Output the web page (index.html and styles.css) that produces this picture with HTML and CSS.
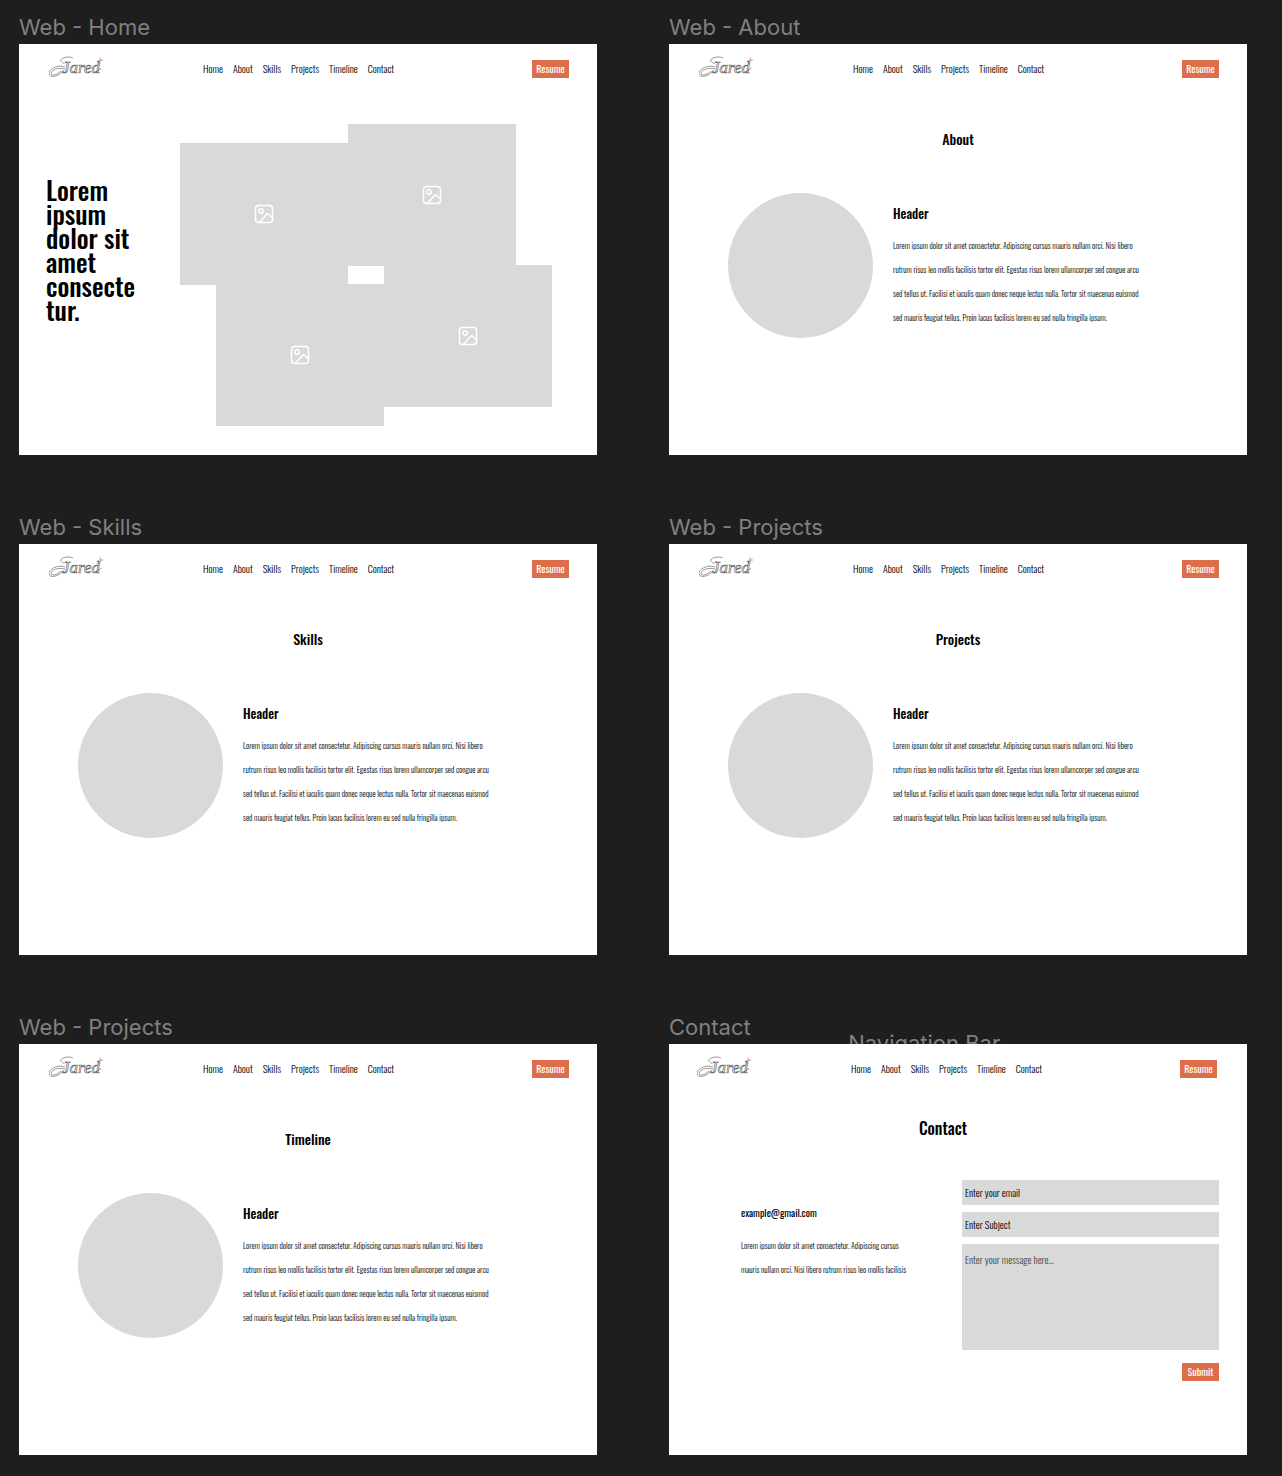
FILE: index.html
```html
<!DOCTYPE html>
<html lang="en">
<head>
<meta charset="utf-8">
<title>Portfolio wireframes</title>
<link rel="stylesheet" href="styles.css">
</head>
<body>
<svg class="defs" aria-hidden="true">
  <symbol id="logo" viewBox="0 0 56 22">
    <g fill="none" stroke="#555" stroke-width="0.6">
      <path d="M12 6C10 1 21 0 24 2M13 6c1 2 4 1 4-1M16 11C8 8-1 14 0 18c1 4 8 3 13-2M16 13C9 11 2 14 2 18c1 2 6 1 10-3"/>
      <text x="13" y="17" font-family="Liberation Serif, serif" font-style="italic" font-size="17">Jared</text>
      <path d="M48 15q3-1 4-3M49 8l3-5"/>
    </g>
    <path d="M51 0l1 3 3 1-3 1-2 1z" fill="#f2a596"/>
  </symbol>
  <symbol id="picture" viewBox="0 0 20 20">
    <g fill="none" stroke="#fff" stroke-width="1.5" stroke-linecap="round" stroke-linejoin="round">
      <rect x="1.5" y="1.5" width="17" height="17" rx="3"/>
      <circle cx="7" cy="7" r="2.2"/>
      <path d="M5.500 18.500L12.300 10.500Q13.500 9.300 14.700 10.500L18.500 14"/>
    </g>
  </symbol>
</svg>
<main class="canvas">
  <section class="frame">
    <h2 class="label">Web - Home</h2>
    <div class="board">
      <header class="bar">
        <svg class="logo" role="img" aria-label="Jared"><use href="#logo"/></svg>
        <nav class="links"><a href="#">Home</a><a href="#">About</a><a href="#">Skills</a><a href="#">Projects</a><a href="#">Timeline</a><a href="#">Contact</a></nav>
        <button class="btn" type="button">Resume</button>
      </header>
      <div class="hero">
        <h1 class="headline">Lorem<br>ipsum<br>dolor sit<br>amet<br>consecte<br>tur.</h1>
        <div class="gallery">
          <div class="pair">
            <div class="tile low"><svg class="pic"><use href="#picture"/></svg></div>
            <div class="tile"><svg class="pic"><use href="#picture"/></svg></div>
          </div>
          <div class="pair second">
            <div class="tile low"><svg class="pic"><use href="#picture"/></svg></div>
            <div class="tile"><svg class="pic"><use href="#picture"/></svg></div>
          </div>
        </div>
      </div>
    </div>
  </section>

  <section class="frame">
    <h2 class="label">Web - About</h2>
    <div class="board">
      <header class="bar">
        <svg class="logo" role="img" aria-label="Jared"><use href="#logo"/></svg>
        <nav class="links"><a href="#">Home</a><a href="#">About</a><a href="#">Skills</a><a href="#">Projects</a><a href="#">Timeline</a><a href="#">Contact</a></nav>
        <button class="btn" type="button">Resume</button>
      </header>
      <h3 class="title">About</h3>
      <div class="intro">
        <div class="avatar"></div>
        <div>
          <h4 class="subhead">Header</h4>
          <p class="copy">Lorem ipsum dolor sit amet consectetur. Adipiscing cursus mauris nullam orci. Nisi libero<br>rutrum risus leo mollis facilisis tortor elit. Egestas risus lorem ullamcorper sed congue arcu<br>sed tellus ut. Facilisi et iaculis quam donec neque lectus nulla. Tortor sit maecenas euismod<br>sed mauris feugiat tellus. Proin lacus facilisis lorem eu sed nulla fringilla ipsum.</p>
        </div>
      </div>
    </div>
  </section>

  <section class="frame">
    <h2 class="label">Web - Skills</h2>
    <div class="board">
      <header class="bar">
        <svg class="logo" role="img" aria-label="Jared"><use href="#logo"/></svg>
        <nav class="links"><a href="#">Home</a><a href="#">About</a><a href="#">Skills</a><a href="#">Projects</a><a href="#">Timeline</a><a href="#">Contact</a></nav>
        <button class="btn" type="button">Resume</button>
      </header>
      <h3 class="title">Skills</h3>
      <div class="intro">
        <div class="avatar"></div>
        <div>
          <h4 class="subhead">Header</h4>
          <p class="copy">Lorem ipsum dolor sit amet consectetur. Adipiscing cursus mauris nullam orci. Nisi libero<br>rutrum risus leo mollis facilisis tortor elit. Egestas risus lorem ullamcorper sed congue arcu<br>sed tellus ut. Facilisi et iaculis quam donec neque lectus nulla. Tortor sit maecenas euismod<br>sed mauris feugiat tellus. Proin lacus facilisis lorem eu sed nulla fringilla ipsum.</p>
        </div>
      </div>
    </div>
  </section>

  <section class="frame">
    <h2 class="label">Web - Projects</h2>
    <div class="board">
      <header class="bar">
        <svg class="logo" role="img" aria-label="Jared"><use href="#logo"/></svg>
        <nav class="links"><a href="#">Home</a><a href="#">About</a><a href="#">Skills</a><a href="#">Projects</a><a href="#">Timeline</a><a href="#">Contact</a></nav>
        <button class="btn" type="button">Resume</button>
      </header>
      <h3 class="title">Projects</h3>
      <div class="intro">
        <div class="avatar"></div>
        <div>
          <h4 class="subhead">Header</h4>
          <p class="copy">Lorem ipsum dolor sit amet consectetur. Adipiscing cursus mauris nullam orci. Nisi libero<br>rutrum risus leo mollis facilisis tortor elit. Egestas risus lorem ullamcorper sed congue arcu<br>sed tellus ut. Facilisi et iaculis quam donec neque lectus nulla. Tortor sit maecenas euismod<br>sed mauris feugiat tellus. Proin lacus facilisis lorem eu sed nulla fringilla ipsum.</p>
        </div>
      </div>
    </div>
  </section>

  <section class="frame">
    <h2 class="label">Web - Projects</h2>
    <div class="board">
      <header class="bar">
        <svg class="logo" role="img" aria-label="Jared"><use href="#logo"/></svg>
        <nav class="links"><a href="#">Home</a><a href="#">About</a><a href="#">Skills</a><a href="#">Projects</a><a href="#">Timeline</a><a href="#">Contact</a></nav>
        <button class="btn" type="button">Resume</button>
      </header>
      <h3 class="title">Timeline</h3>
      <div class="intro">
        <div class="avatar"></div>
        <div>
          <h4 class="subhead">Header</h4>
          <p class="copy">Lorem ipsum dolor sit amet consectetur. Adipiscing cursus mauris nullam orci. Nisi libero<br>rutrum risus leo mollis facilisis tortor elit. Egestas risus lorem ullamcorper sed congue arcu<br>sed tellus ut. Facilisi et iaculis quam donec neque lectus nulla. Tortor sit maecenas euismod<br>sed mauris feugiat tellus. Proin lacus facilisis lorem eu sed nulla fringilla ipsum.</p>
        </div>
      </div>
    </div>
  </section>

  <section class="frame">
    <h2 class="label">Contact</h2>
    <span class="label stray">Navigation Bar</span>
    <div class="board">
      <header class="bar inset">
        <svg class="logo" role="img" aria-label="Jared"><use href="#logo"/></svg>
        <nav class="links"><a href="#">Home</a><a href="#">About</a><a href="#">Skills</a><a href="#">Projects</a><a href="#">Timeline</a><a href="#">Contact</a></nav>
        <button class="btn" type="button">Resume</button>
      </header>
      <h3 class="title large">Contact</h3>
      <div class="contact">
        <div class="details">
          <h4 class="email">example@gmail.com</h4>
          <p class="copy">Lorem ipsum dolor sit amet consectetur. Adipiscing cursus<br>mauris nullam orci. Nisi libero rutrum risus leo mollis facilisis</p>
        </div>
        <form class="form">
          <input class="field" type="email" aria-label="Email" placeholder="Enter your email">
          <input class="field" type="text" aria-label="Subject" placeholder="Enter Subject">
          <textarea class="field message" aria-label="Message" placeholder="Enter your message here..."></textarea>
          <button class="btn submit" type="submit">Submit</button>
        </form>
      </div>
    </div>
  </section>
</main>
</body>
</html>
```
FILE: styles.css
```css
* { box-sizing: border-box; }

body {
  margin: 0;
  background: #1e1e1e;
  color: #000;
  font-family: Oswald, "Liberation Sans Narrow", "Liberation Sans", sans-serif;
}

h1, h2, h3, h4, p { margin: 0; }

.defs { position: absolute; width: 0; height: 0; }

.canvas {
  display: grid;
  grid-template-columns: 1fr 1fr;
  gap: 57px 72px;
  padding: 12px 35px 21px 19px;
}

.frame { position: relative; }

.label {
  height: 32px;
  font: 400 22px/30px Inter, sans-serif;
  color: #808080;
}

.stray { position: absolute; left: 31%; top: 16px; }

.board {
  position: relative;
  min-height: 411px;
  background: #fff;
}

.bar {
  display: flex;
  align-items: center;
  height: 50px;
  padding: 0 28px 0 30px;
}

.bar.inset { padding: 0 30px 0 28px; }

.logo { width: 56px; height: 22px; margin-bottom: 4px; }

.links {
  display: flex;
  gap: 10px;
  margin-left: 98px;
  font-size: 10px;
  font-weight: 300;
  line-height: 16px;
}

.links a { color: #000; text-decoration: none; }

.btn {
  width: 37px;
  height: 18px;
  margin-left: auto;
  padding: 0;
  border: 0;
  background: #dc6e4c;
  color: #fff;
  font: 400 10px/18px Oswald, "Liberation Sans Narrow", "Liberation Sans", sans-serif;
}

.hero {
  display: flex;
  padding: 30px 45px 28px 27px;
}

.headline {
  flex: 1;
  padding-top: 54px;
  font-size: 26px;
  font-weight: 500;
  line-height: 24px;
  white-space: nowrap;
}

.gallery { flex: 0 0 372px; }

.pair { display: flex; align-items: flex-start; }

.pair.second { margin: -20px 0 0 36px; }

.tile {
  display: flex;
  align-items: center;
  justify-content: center;
  width: 168px;
  height: 142px;
  background: #d9d9d9;
}

.tile.low { margin-top: 19px; }

.pic { width: 20px; height: 20px; }

.title {
  padding-top: 33px;
  font-size: 14px;
  font-weight: 500;
  line-height: 24px;
  text-align: center;
}

.title.large { padding: 22px 30px 0 0; font-size: 16px; }

.intro {
  display: flex;
  gap: 20px;
  padding: 42px 59px 0;
}

.avatar {
  flex: none;
  width: 145px;
  height: 145px;
  border-radius: 50%;
  background: #d9d9d9;
}

.subhead, .email {
  font-size: 13px;
  font-weight: 500;
  line-height: 24px;
}

.subhead { padding: 8px 0; }

.copy {
  font-size: 8px;
  font-weight: 300;
  line-height: 24px;
  white-space: nowrap;
}

.contact {
  display: grid;
  grid-template-columns: 1fr 257px;
  padding: 40px 28px 0 72px;
}

.email { padding: 21px 0 8px; font-size: 10px; font-weight: 400; }

.form {
  display: flex;
  flex-direction: column;
  gap: 7px;
}

.field {
  display: block;
  width: 100%;
  height: 25px;
  padding: 0 3px;
  border: 0;
  border-radius: 0;
  background: #d9d9d9;
  font: 300 10px/16px Oswald, "Liberation Sans Narrow", "Liberation Sans", sans-serif;
}

.field::placeholder { color: #000; opacity: 1; }

.message { height: 106px; padding: 8px 3px; resize: none; }

.message::placeholder { color: #444; }

.submit { margin-top: 6px; }
```
